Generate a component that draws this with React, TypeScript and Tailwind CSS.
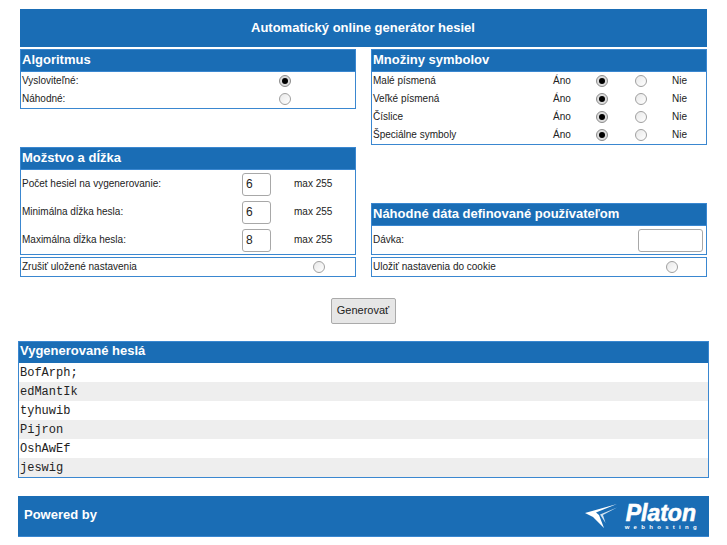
import React from "react";

function Radio({ on = false }: { on?: boolean }) {
  return on ? (
    <span className="flex h-[12px] w-[12px] shrink-0 items-center justify-center rounded-full border border-[#8c8c8c] bg-[#dcdcdc]">
      <span className="h-[6px] w-[6px] rounded-full bg-black" />
    </span>
  ) : (
    <span className="h-[12px] w-[12px] shrink-0 rounded-full border border-[#a0a0a0] bg-gradient-to-br from-[#e8e8e8] to-white" />
  );
}

function Head({ children, tight = false }: { children: React.ReactNode; tight?: boolean }) {
  return (
    <div
      className={`flex items-center bg-[#1a6db5] pl-[1px] text-[13px] font-bold leading-none text-white ${
        tight ? "h-[21px] pb-[5px]" : "h-[22px] border-b border-[#3a87d0] pb-[2px]"
      }`}
    >
      {children}
    </div>
  );
}

function Panel({ title, children }: { title?: string; children: React.ReactNode }) {
  return (
    <div className="border border-[#3a87d0]">
      {title && <Head>{title}</Head>}
      {children}
    </div>
  );
}

function Label({ className = "", children }: { className?: string; children: React.ReactNode }) {
  return <span className={`pb-[2px] ${className}`}>{children}</span>;
}

function NumberRow({ label, value }: { label: string; value: string }) {
  return (
    <div className="flex h-[28px] items-center pl-[1px] text-[10px] text-[#222]">
      <Label className="w-[220px]">{label}</Label>
      <span className="flex h-[23px] w-[29px] items-center rounded-[3px] border border-[#a8a8a8] pb-[1px] pl-[3px] text-[12px] text-[#222]">
        {value}
      </span>
      <Label className="ml-[23px]">max 255</Label>
    </div>
  );
}

function SetRow({ label }: { label: string }) {
  return (
    <div className="flex h-[18px] items-center pl-[1px] text-[10px] text-[#222]">
      <Label className="w-[180px]">{label}</Label>
      <Label className="w-[43px]">Áno</Label>
      <Radio on />
      <span className="w-[27px]" />
      <Radio />
      <Label className="ml-[25px]">Nie</Label>
    </div>
  );
}

export default function App() {
  return (
    <div className="h-[545px] w-[727px] overflow-hidden bg-white pt-[9px] font-['Liberation_Sans',Arial,sans-serif]">
      <div className="mx-[20px]">
        <div className="flex h-[38px] items-center justify-center bg-[#1a6db5] pr-[1px] text-[13px] font-bold text-white">
          Automatický online generátor hesiel
        </div>
        <div className="mt-[2px] flex justify-between">
          <div className="w-[336px]">
            <Panel title="Algoritmus">
              <div className="flex h-[18px] items-center pl-[1px] text-[10px] text-[#222]">
                <Label className="w-[257px]">Vysloviteľné:</Label>
                <Radio on />
              </div>
              <div className="flex h-[18px] items-center pl-[1px] text-[10px] text-[#222]">
                <Label className="w-[257px]">Náhodné:</Label>
                <Radio />
              </div>
            </Panel>
            <div className="mt-[38px]">
              <Panel title="Možstvo a dĺžka">
                <NumberRow label="Počet hesiel na vygenerovanie:" value="6" />
                <NumberRow label="Minimálna dĺžka hesla:" value="6" />
                <NumberRow label="Maximálna dĺžka hesla:" value="8" />
              </Panel>
            </div>
            <div className="mt-[2px]">
              <Panel>
                <div className="flex h-[18px] items-center pl-[1px] text-[10px] text-[#222]">
                  <Label className="w-[291px]">Zrušiť uložené nastavenia</Label>
                  <Radio />
                </div>
              </Panel>
            </div>
          </div>
          <div className="w-[336px]">
            <Panel title="Množiny symbolov">
              <SetRow label="Malé písmená" />
              <SetRow label="Veľké písmená" />
              <SetRow label="Číslice" />
              <SetRow label="Špeciálne symboly" />
            </Panel>
            <div className="mt-[58px]">
              <Panel title="Náhodné dáta definované používateľom">
                <div className="flex h-[28px] items-center justify-between pl-[1px] pr-[3px] text-[10px] text-[#222]">
                  <Label>Dávka:</Label>
                  <span className="h-[23px] w-[65px] rounded-[3px] border border-[#a8a8a8]" />
                </div>
              </Panel>
            </div>
            <div className="mt-[2px]">
              <Panel>
                <div className="flex h-[18px] items-center pl-[1px] text-[10px] text-[#222]">
                  <Label className="w-[293px]">Uložiť nastavenia do cookie</Label>
                  <Radio />
                </div>
              </Panel>
            </div>
          </div>
        </div>
        <div className="mt-[21px] flex justify-center">
          <button className="ml-[-1px] h-[26px] w-[65px] rounded-[2px] border border-[#aaa] bg-[#e6e6e6] pb-[1px] text-[11px] text-[#222]">
            Generovať
          </button>
        </div>
      </div>
      <div className="mx-[18px] mt-[17px] border border-[#3a87d0]">
        <Head tight>Vygenerované heslá</Head>
        <div className="font-['Liberation_Mono',monospace] text-[12px] text-[#222]">
          {["BofArph;", "edMantIk", "tyhuwib", "Pijron", "OshAwEf", "jeswig"].map((p, i) => (
            <div key={p} className={`flex h-[19px] items-center pl-[1px] ${i % 2 ? "bg-[#eeeeee]" : "bg-white"}`}>
              {p}
            </div>
          ))}
        </div>
      </div>
      <div className="mx-[18px] mt-[18px] flex h-[41px] items-center justify-between border-b border-[#3a87d0] bg-[#1a6db5] pl-[6px] pr-[8px] text-[13px] font-bold text-white">
        <span className="pb-[2px]">Powered by</span>
        <div className="flex items-center gap-[6px]">
          <svg width="34" height="27" viewBox="0 0 34 27" fill="none">
            <path d="M1 10 L33 1 L12 9.5 L15 12 L20 25 L9 14 Z" fill="#ffffff" />
            <path d="M16 11.5 L33 4.5 L19 12 L21.5 20 Z" fill="#ffffff" opacity="0.8" />
          </svg>
          <div className="flex flex-col items-start">
            <span className="pl-[2px] text-[23px] font-bold italic leading-[22px] [-webkit-text-stroke:0.6px_white]">
              Platon
            </span>
            <span className="pl-[1px] text-[6px] font-bold leading-[6px] tracking-[4.3px]">webhosting</span>
          </div>
        </div>
      </div>
    </div>
  );
}
